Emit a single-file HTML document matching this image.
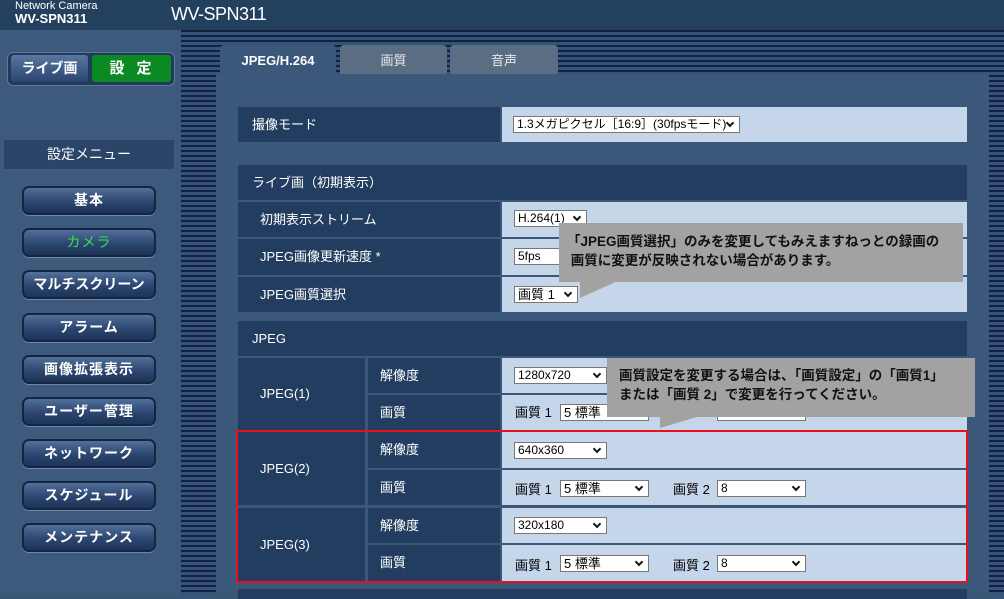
<!DOCTYPE html>
<html><head><meta charset="utf-8"><style>
*{margin:0;padding:0;box-sizing:border-box}
body{width:1004px;height:594px;overflow:hidden;background:#3a5677;font-family:"Liberation Sans","Noto Sans CJK JP",sans-serif;position:relative;color:#fff}
.a{position:absolute}
.stripe{background:repeating-linear-gradient(180deg,#12223e 0,#12223e 2px,#35527a 2px,#35527a 5px)}
.btn{position:absolute;left:22px;width:134px;height:29px;border-radius:7px;background:linear-gradient(#51709a,#2c4670 55%,#1e3356);border:2px solid #132540;box-shadow:0 1px 0 #6a87ad;color:#fff;font-weight:bold;font-size:14px;text-align:center;line-height:25px;letter-spacing:1px}
.lab{position:absolute;background:#223d5f;font-size:13px;color:#fff;padding-left:14px}
.val{position:absolute;background:#c5d5ea;color:#000;font-size:12px}
.sel{position:absolute;background:#fff;border:1px solid #777;height:17px;font-size:12px;line-height:15px;padding-left:3px;color:#000}
.sel i{position:absolute;right:6px;top:3px;width:6px;height:6px;border-right:2px solid #111;border-bottom:2px solid #111;transform:rotate(45deg)}
.call{position:absolute;background:#a2a2a2;color:#111;font-size:13.5px;line-height:19px;font-weight:bold}
</style></head><body>
<div class="a" style="left:0;top:0;width:1004px;height:30px;background:#24405f"></div>
<div class="a" style="left:15px;top:1px;font-size:11px;line-height:11px">Network Camera</div>
<div class="a" style="left:15px;top:12px;font-size:13px;font-weight:bold;line-height:14px">WV-SPN311</div>
<div class="a" style="left:171px;top:4px;font-size:18px;letter-spacing:-0.5px">WV-SPN311</div>
<div class="a" style="left:0;top:30px;width:181px;height:564px;background:#3d5a7d"></div>
<div class="a stripe" style="left:181px;top:30px;width:823px;height:564px"></div>
<div class="a" style="left:7px;top:52px;width:168px;height:34px;border-radius:6px;background:#223a5c;border:1px solid #5f7898"></div>
<div class="a" style="left:11px;top:55px;width:77px;height:27px;border-radius:3px;background:linear-gradient(#58779f,#2b4570);font-size:14px;font-weight:bold;text-align:center;line-height:27px">ライブ画</div>
<div class="a" style="left:92px;top:55px;width:79px;height:27px;border-radius:3px;background:#0b8a24;font-size:15px;font-weight:bold;text-align:center;line-height:27px;letter-spacing:12px;padding-left:10px">設定</div>
<div class="a" style="left:4px;top:140px;width:170px;height:29px;background:#2a4567;font-size:14px;text-align:center;line-height:29px">設定メニュー</div>
<div class="btn" style="top:186px">基本</div>
<div class="btn" style="top:228px;color:#2ee84a;font-weight:normal">カメラ</div>
<div class="btn" style="top:270px;letter-spacing:0">マルチスクリーン</div>
<div class="btn" style="top:313px">アラーム</div>
<div class="btn" style="top:355px">画像拡張表示</div>
<div class="btn" style="top:397px">ユーザー管理</div>
<div class="btn" style="top:439px">ネットワーク</div>
<div class="btn" style="top:481px">スケジュール</div>
<div class="btn" style="top:523px">メンテナンス</div>
<div class="a" style="left:216px;top:74px;width:773px;height:520px;background:#3b587b"></div>
<div class="a" style="left:220px;top:45px;width:116px;height:31px;background:#3b587b;border-radius:4px 4px 0 0;font-size:13px;font-weight:bold;text-align:center;line-height:31px">JPEG/H.264</div>
<div class="a" style="left:340px;top:45px;width:107px;height:29px;background:#5a6d83;border-radius:4px 4px 0 0;font-size:13px;text-align:center;line-height:31px;color:#e8e8e8">画質</div>
<div class="a" style="left:450px;top:45px;width:108px;height:29px;background:#5a6d83;border-radius:4px 4px 0 0;font-size:13px;text-align:center;line-height:31px;color:#e8e8e8">音声</div>
<div class="lab" style="left:238px;top:107px;width:262px;height:35px;line-height:35px">撮像モード</div>
<div class="val" style="left:502px;top:107px;width:465px;height:35px"></div>
<div class="sel" style="left:513px;top:116px;width:227px">1.3メガピクセル［16:9］(30fpsモード)<i></i></div>
<div class="lab" style="left:238px;top:165px;width:729px;height:35px;line-height:35px">ライブ画（初期表示）</div>
<div class="lab" style="left:238px;top:202px;width:262px;height:35px;line-height:35px;padding-left:22px">初期表示ストリーム</div>
<div class="val" style="left:502px;top:202px;width:465px;height:35px"></div>
<div class="sel" style="left:514px;top:210px;width:73px">H.264(1)<i></i></div>
<div class="lab" style="left:238px;top:239px;width:262px;height:36px;line-height:36px;padding-left:22px">JPEG画像更新速度 *</div>
<div class="val" style="left:502px;top:239px;width:465px;height:36px"></div>
<div class="sel" style="left:514px;top:248px;width:73px">5fps<i></i></div>
<div class="lab" style="left:238px;top:277px;width:262px;height:35px;line-height:35px;padding-left:22px">JPEG画質選択</div>
<div class="val" style="left:502px;top:277px;width:465px;height:35px"></div>
<div class="sel" style="left:514px;top:286px;width:64px;font-size:13px">画質 1<i></i></div>
<div class="lab" style="left:238px;top:321px;width:729px;height:35px;line-height:35px">JPEG</div>
<div class="lab" style="left:238px;top:358px;width:127px;height:72px;line-height:72px;padding-left:22px">JPEG(1)</div>
<div class="lab" style="left:368px;top:358px;width:132px;height:35px;line-height:35px;padding-left:12px">解像度</div>
<div class="lab" style="left:368px;top:395px;width:132px;height:35px;line-height:35px;padding-left:12px">画質</div>
<div class="val" style="left:502px;top:358px;width:465px;height:35px"></div>
<div class="val" style="left:502px;top:395px;width:465px;height:35px"></div>
<div class="sel" style="left:514px;top:367px;width:93px">1280x720<i></i></div>
<div class="a" style="left:515px;top:402px;font-size:13px;color:#000">画質 1</div>
<div class="sel" style="left:560px;top:404px;width:89px;font-size:13px">5 標準<i></i></div>
<div class="sel" style="left:717px;top:404px;width:89px">8<i></i></div>
<div class="lab" style="left:238px;top:432px;width:127px;height:73px;line-height:73px;padding-left:22px">JPEG(2)</div>
<div class="lab" style="left:368px;top:432px;width:132px;height:36px;line-height:36px;padding-left:12px">解像度</div>
<div class="lab" style="left:368px;top:470px;width:132px;height:35px;line-height:35px;padding-left:12px">画質</div>
<div class="val" style="left:502px;top:432px;width:465px;height:36px"></div>
<div class="val" style="left:502px;top:470px;width:465px;height:35px"></div>
<div class="sel" style="left:514px;top:442px;width:93px">640x360<i></i></div>
<div class="a" style="left:515px;top:479px;font-size:13px;color:#000">画質 1</div>
<div class="sel" style="left:560px;top:480px;width:89px;font-size:13px">5 標準<i></i></div>
<div class="a" style="left:673px;top:479px;font-size:13px;color:#000">画質 2</div>
<div class="sel" style="left:717px;top:480px;width:89px">8<i></i></div>
<div class="lab" style="left:238px;top:508px;width:127px;height:73px;line-height:73px;padding-left:22px">JPEG(3)</div>
<div class="lab" style="left:368px;top:508px;width:132px;height:35px;line-height:35px;padding-left:12px">解像度</div>
<div class="lab" style="left:368px;top:545px;width:132px;height:36px;line-height:36px;padding-left:12px">画質</div>
<div class="val" style="left:502px;top:508px;width:465px;height:35px"></div>
<div class="val" style="left:502px;top:545px;width:465px;height:36px"></div>
<div class="sel" style="left:514px;top:517px;width:93px">320x180<i></i></div>
<div class="a" style="left:515px;top:555px;font-size:13px;color:#000">画質 1</div>
<div class="sel" style="left:560px;top:555px;width:89px;font-size:13px">5 標準<i></i></div>
<div class="a" style="left:673px;top:555px;font-size:13px;color:#000">画質 2</div>
<div class="sel" style="left:717px;top:555px;width:89px">8<i></i></div>
<div class="a" style="left:236px;top:430px;width:732px;height:153px;border:2px solid #e8101a"></div>
<div class="lab" style="left:238px;top:589px;width:729px;height:10px"></div>
<svg class="a" style="left:0;top:0" width="1004" height="594">
<polygon points="580,280 620,280 580,298" fill="#a2a2a2"/>
<polygon points="660,416 700,416 660,428" fill="#a2a2a2"/>
</svg>
<div class="call" style="left:559px;top:223px;width:404px;height:59px;padding:9px 0 0 8px">「JPEG画質選択」のみを変更してもみえますねっとの録画の<br>&nbsp;画質に変更が反映されない場合があります。</div>
<div class="call" style="left:607px;top:358px;width:368px;height:59px;padding:8px 0 0 12px">画質設定を変更する場合は、「画質設定」の「画質1」<br>または「画質 2」で変更を行ってください。</div>
</body></html>
